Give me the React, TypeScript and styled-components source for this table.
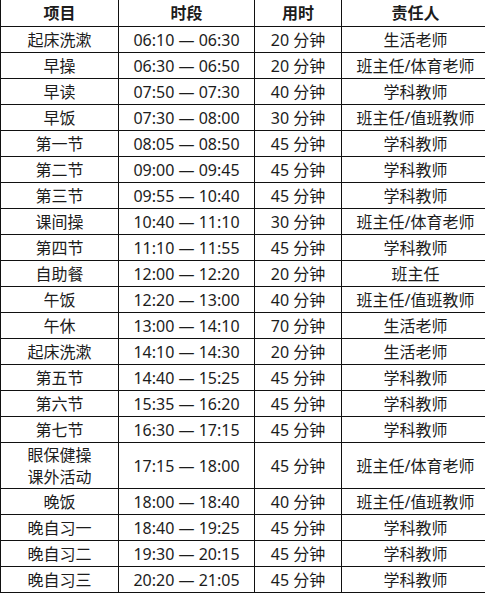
import styled, { createGlobalStyle } from 'styled-components'

const GlobalStyle = createGlobalStyle`
  html, body {
    margin: 0;
    padding: 0;
    background: #ffffff;
  }
`

const Table = styled.table`
  width: 485px;
  border-collapse: collapse;
  table-layout: fixed;
  font-family: "Noto Sans", "Noto Sans CJK SC", sans-serif;
  font-size: 16px;
  color: #1c1c1c;
`

const HeadCell = styled.th<{ $w: number }>`
  width: ${(p) => p.$w}px;
  height: 26px;
  padding: 0;
  border: 1px solid #111;
  border-top: none;
  font-weight: bold;
  text-align: center;
  vertical-align: middle;
  line-height: 20px;
`

const Cell = styled.td<{ $tall?: boolean }>`
  height: ${(p) => (p.$tall ? 45 : 25)}px;
  padding: 0;
  border: 1px solid #111;
  text-align: center;
  vertical-align: middle;
  line-height: ${(p) => (p.$tall ? '22px' : '20px')};
  white-space: nowrap;
`

type Row = { item: string[]; time: string; mins: number; owner: string }

const rows: Row[] = [
  { item: ['起床洗漱'], time: '06:10 — 06:30', mins: 20, owner: '生活老师' },
  { item: ['早操'], time: '06:30 — 06:50', mins: 20, owner: '班主任/体育老师' },
  { item: ['早读'], time: '07:50 — 07:30', mins: 40, owner: '学科教师' },
  { item: ['早饭'], time: '07:30 — 08:00', mins: 30, owner: '班主任/值班教师' },
  { item: ['第一节'], time: '08:05 — 08:50', mins: 45, owner: '学科教师' },
  { item: ['第二节'], time: '09:00 — 09:45', mins: 45, owner: '学科教师' },
  { item: ['第三节'], time: '09:55 — 10:40', mins: 45, owner: '学科教师' },
  { item: ['课间操'], time: '10:40 — 11:10', mins: 30, owner: '班主任/体育老师' },
  { item: ['第四节'], time: '11:10 — 11:55', mins: 45, owner: '学科教师' },
  { item: ['自助餐'], time: '12:00 — 12:20', mins: 20, owner: '班主任' },
  { item: ['午饭'], time: '12:20 — 13:00', mins: 40, owner: '班主任/值班教师' },
  { item: ['午休'], time: '13:00 — 14:10', mins: 70, owner: '生活老师' },
  { item: ['起床洗漱'], time: '14:10 — 14:30', mins: 20, owner: '生活老师' },
  { item: ['第五节'], time: '14:40 — 15:25', mins: 45, owner: '学科教师' },
  { item: ['第六节'], time: '15:35 — 16:20', mins: 45, owner: '学科教师' },
  { item: ['第七节'], time: '16:30 — 17:15', mins: 45, owner: '学科教师' },
  { item: ['眼保健操', '课外活动'], time: '17:15 — 18:00', mins: 45, owner: '班主任/体育老师' },
  { item: ['晚饭'], time: '18:00 — 18:40', mins: 40, owner: '班主任/值班教师' },
  { item: ['晚自习一'], time: '18:40 — 19:25', mins: 45, owner: '学科教师' },
  { item: ['晚自习二'], time: '19:30 — 20:15', mins: 45, owner: '学科教师' },
  { item: ['晚自习三'], time: '20:20 — 21:05', mins: 45, owner: '学科教师' },
]

export default function App() {
  return (
    <>
      <GlobalStyle />
      <Table>
        <thead>
          <tr>
            <HeadCell $w={117}>项目</HeadCell>
            <HeadCell $w={135}>时段</HeadCell>
            <HeadCell $w={86}>用时</HeadCell>
            <HeadCell $w={147}>责任人</HeadCell>
          </tr>
        </thead>
        <tbody>
          {rows.map((r, i) => {
            const tall = r.item.length > 1
            return (
              <tr key={i}>
                <Cell $tall={tall}>
                  {r.item.map((t, j) => (
                    <div key={j}>{t}</div>
                  ))}
                </Cell>
                <Cell $tall={tall}>{r.time}</Cell>
                <Cell $tall={tall}>{r.mins} 分钟</Cell>
                <Cell $tall={tall}>{r.owner}</Cell>
              </tr>
            )
          })}
        </tbody>
      </Table>
    </>
  )
}
